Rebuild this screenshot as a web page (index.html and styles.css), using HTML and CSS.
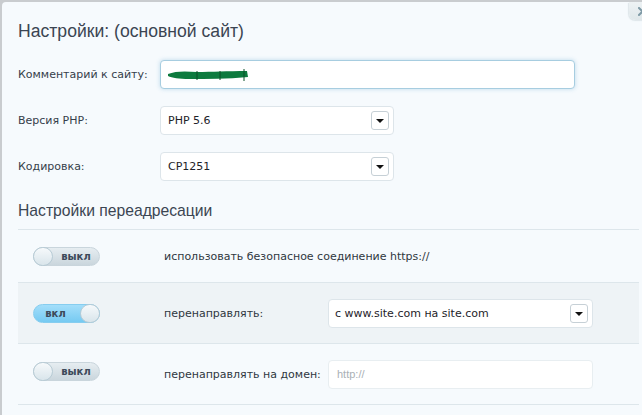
FILE: index.html
```html
<!DOCTYPE html>
<html lang="ru">
<head>
<meta charset="utf-8">
<title>Настройки</title>
<link rel="stylesheet" href="styles.css">
</head>
<body>
<div class="backdrop">
  <div class="dialog">
    <button class="close" aria-label="Закрыть">
      <svg width="9" height="9" viewBox="0 0 9 9"><path d="M1 1 L8 8 M8 1 L1 8" stroke="#7f9aa6" stroke-width="2" stroke-linecap="square"/></svg>
    </button>
    <h1 class="title">Настройки: (основной сайт)</h1>
    <div class="form">
      <label class="label">Комментарий к сайту:</label>
      <div class="field field-focus wide">
        <svg class="scribble" width="82" height="14" viewBox="0 0 82 14"><path d="M1 6 C8 3 18 3 30 4 C45 4 60 3 80 3 L81 9 C60 11 40 11 22 11 C12 11 5 10 1 8 Z" fill="#0d7a3e"/><path d="M77 1 L77 13 M30 3 L30 12 M53 3 L53 12" stroke="#0a4f27" stroke-width="1"/></svg>
      </div>
      <label class="label">Версия PHP:</label>
      <div class="field select">
        <span class="value">PHP 5.6</span>
        <span class="arrow"></span>
      </div>
      <label class="label">Кодировка:</label>
      <div class="field select">
        <span class="value">CP1251</span>
        <span class="arrow"></span>
      </div>
    </div>
    <h2 class="subtitle">Настройки переадресации</h2>
    <div class="rows">
      <div class="row row-short">
        <div class="toggle off"><span class="knob"></span><span class="tlabel">выкл</span></div>
        <div class="rtext">использовать безопасное соединение https://</div>
      </div>
      <div class="row alt">
        <div class="toggle on"><span class="tlabel">вкл</span><span class="knob"></span></div>
        <div class="rtext">перенаправлять:</div>
        <div class="field select rsel">
          <span class="value">с www.site.com на site.com</span>
          <span class="arrow"></span>
        </div>
      </div>
      <div class="row">
        <div class="toggle off up"><span class="knob"></span><span class="tlabel">выкл</span></div>
        <div class="rtext">перенаправлять на домен:</div>
        <div class="field rsel plain">
          <span class="placeholder">http://</span>
        </div>
      </div>
    </div>
  </div>
</div>
</body>
</html>
```
FILE: styles.css
```css
html, body {
  margin: 0;
  padding: 0;
}
body {
  background: #c9cccf;
  font-family: "DejaVu Sans", sans-serif;
  width: 642px;
  height: 415px;
  overflow: hidden;
}
.backdrop {
  padding: 2px 0 0 2px;
  height: 413px;
}
.dialog {
  position: relative;
  width: 621px;
  height: 413px;
  padding: 0 17px 0 16px;
  background: #f6fafd;
  border-right: 1px solid #d3d9dc;
  border-top-left-radius: 4px;
  box-sizing: content-box;
}
.close {
  position: absolute;
  top: 0;
  right: 0;
  width: 27px;
  height: 18px;
  border: none;
  padding: 0;
  border-bottom-left-radius: 7px;
  background: linear-gradient(#edf2f4, #dfe7ea);
  box-shadow: -1px 1px 1px rgba(150,170,180,0.25);
  display: flex;
  align-items: center;
  justify-content: center;
}
.title {
  margin: 0;
  padding-top: 17px;
  font-family: "Liberation Sans", Arial, sans-serif;
  font-weight: normal;
  font-size: 17.6px;
  line-height: 24px;
  color: #3b4552;
}
.form {
  display: grid;
  grid-template-columns: 142px auto;
  row-gap: 17px;
  margin-top: 17px;
  align-items: center;
  justify-items: start;
}
.label {
  font-size: 11px;
  color: #353e4a;
}
.field {
  box-sizing: border-box;
  height: 29px;
  background: #fff;
  border: 1px solid #dde5ea;
  border-radius: 4px;
  display: flex;
  align-items: center;
  position: relative;
}
.field-focus {
  border-color: #a7cde0;
  box-shadow: 0 0 4px rgba(120, 180, 215, 0.45);
}
.wide {
  width: 415px;
}
.scribble {
  margin-left: 6px;
}
.select {
  width: 234px;
  padding: 0 4px 0 7px;
  justify-content: space-between;
}
.value {
  font-size: 11px;
  color: #1e2329;
}
.arrow {
  box-sizing: border-box;
  width: 18px;
  height: 19px;
  border: 1px solid #c6d0d6;
  border-radius: 3px;
  background: #fff;
  display: flex;
  align-items: center;
  justify-content: center;
}
.arrow::after {
  content: "";
  width: 0;
  height: 0;
  border-left: 4px solid transparent;
  border-right: 4px solid transparent;
  border-top: 4px solid #111;
  margin-top: 1px;
}
.subtitle {
  margin: 20px 0 0 0;
  font-family: "Liberation Sans", Arial, sans-serif;
  font-weight: normal;
  font-size: 15.7px;
  line-height: 20px;
  color: #3b4552;
}
.rows {
  margin-top: 8px;
  border-top: 1px solid #dde6eb;
}
.row {
  display: flex;
  align-items: center;
  height: 60px;
  border-bottom: 1px solid #dde6eb;
  padding-left: 15px;
}
.row-short {
  height: 52px;
}
.alt {
  background: #eef3f6;
}
.toggle {
  box-sizing: border-box;
  width: 67px;
  height: 19px;
  border-radius: 10px;
  display: flex;
  align-items: center;
  flex-shrink: 0;
}
.toggle.up {
  margin-top: -6px;
}
.toggle.off {
  background: linear-gradient(#e6edf1, #cad6dd);
  border: 1px solid #c9d5dc;
}
.toggle.on {
  background: linear-gradient(#a3defa, #76caf2);
  border: 1px solid #86cdef;
}
.knob {
  box-sizing: border-box;
  width: 20px;
  height: 19px;
  margin: -1px;
  border-radius: 10px;
  background: linear-gradient(#f6f9fb, #d9e5eb);
  border: 1px solid #b7cbd5;
  flex-shrink: 0;
}
.tlabel {
  flex: 1;
  text-align: center;
  font-size: 10px;
  font-weight: bold;
  color: #3d4a5a;
}
.toggle.off .tlabel {
  padding-left: 1px;
}
.toggle.on .tlabel {
  padding-right: 4px;
}
.rtext {
  margin-left: 64px;
  width: 164px;
  flex-shrink: 0;
  font-size: 11px;
  color: #2f3740;
  white-space: nowrap;
}
.row-short .rtext {
  width: auto;
}
.rsel {
  width: 265px;
}
.rsel.select {
  padding-left: 6px;
}
.plain {
  border-color: #e8eef1;
  padding-left: 8px;
}
.placeholder {
  font-family: "Liberation Sans", Arial, sans-serif;
  font-size: 11px;
  color: #a9b0b5;
}
```
